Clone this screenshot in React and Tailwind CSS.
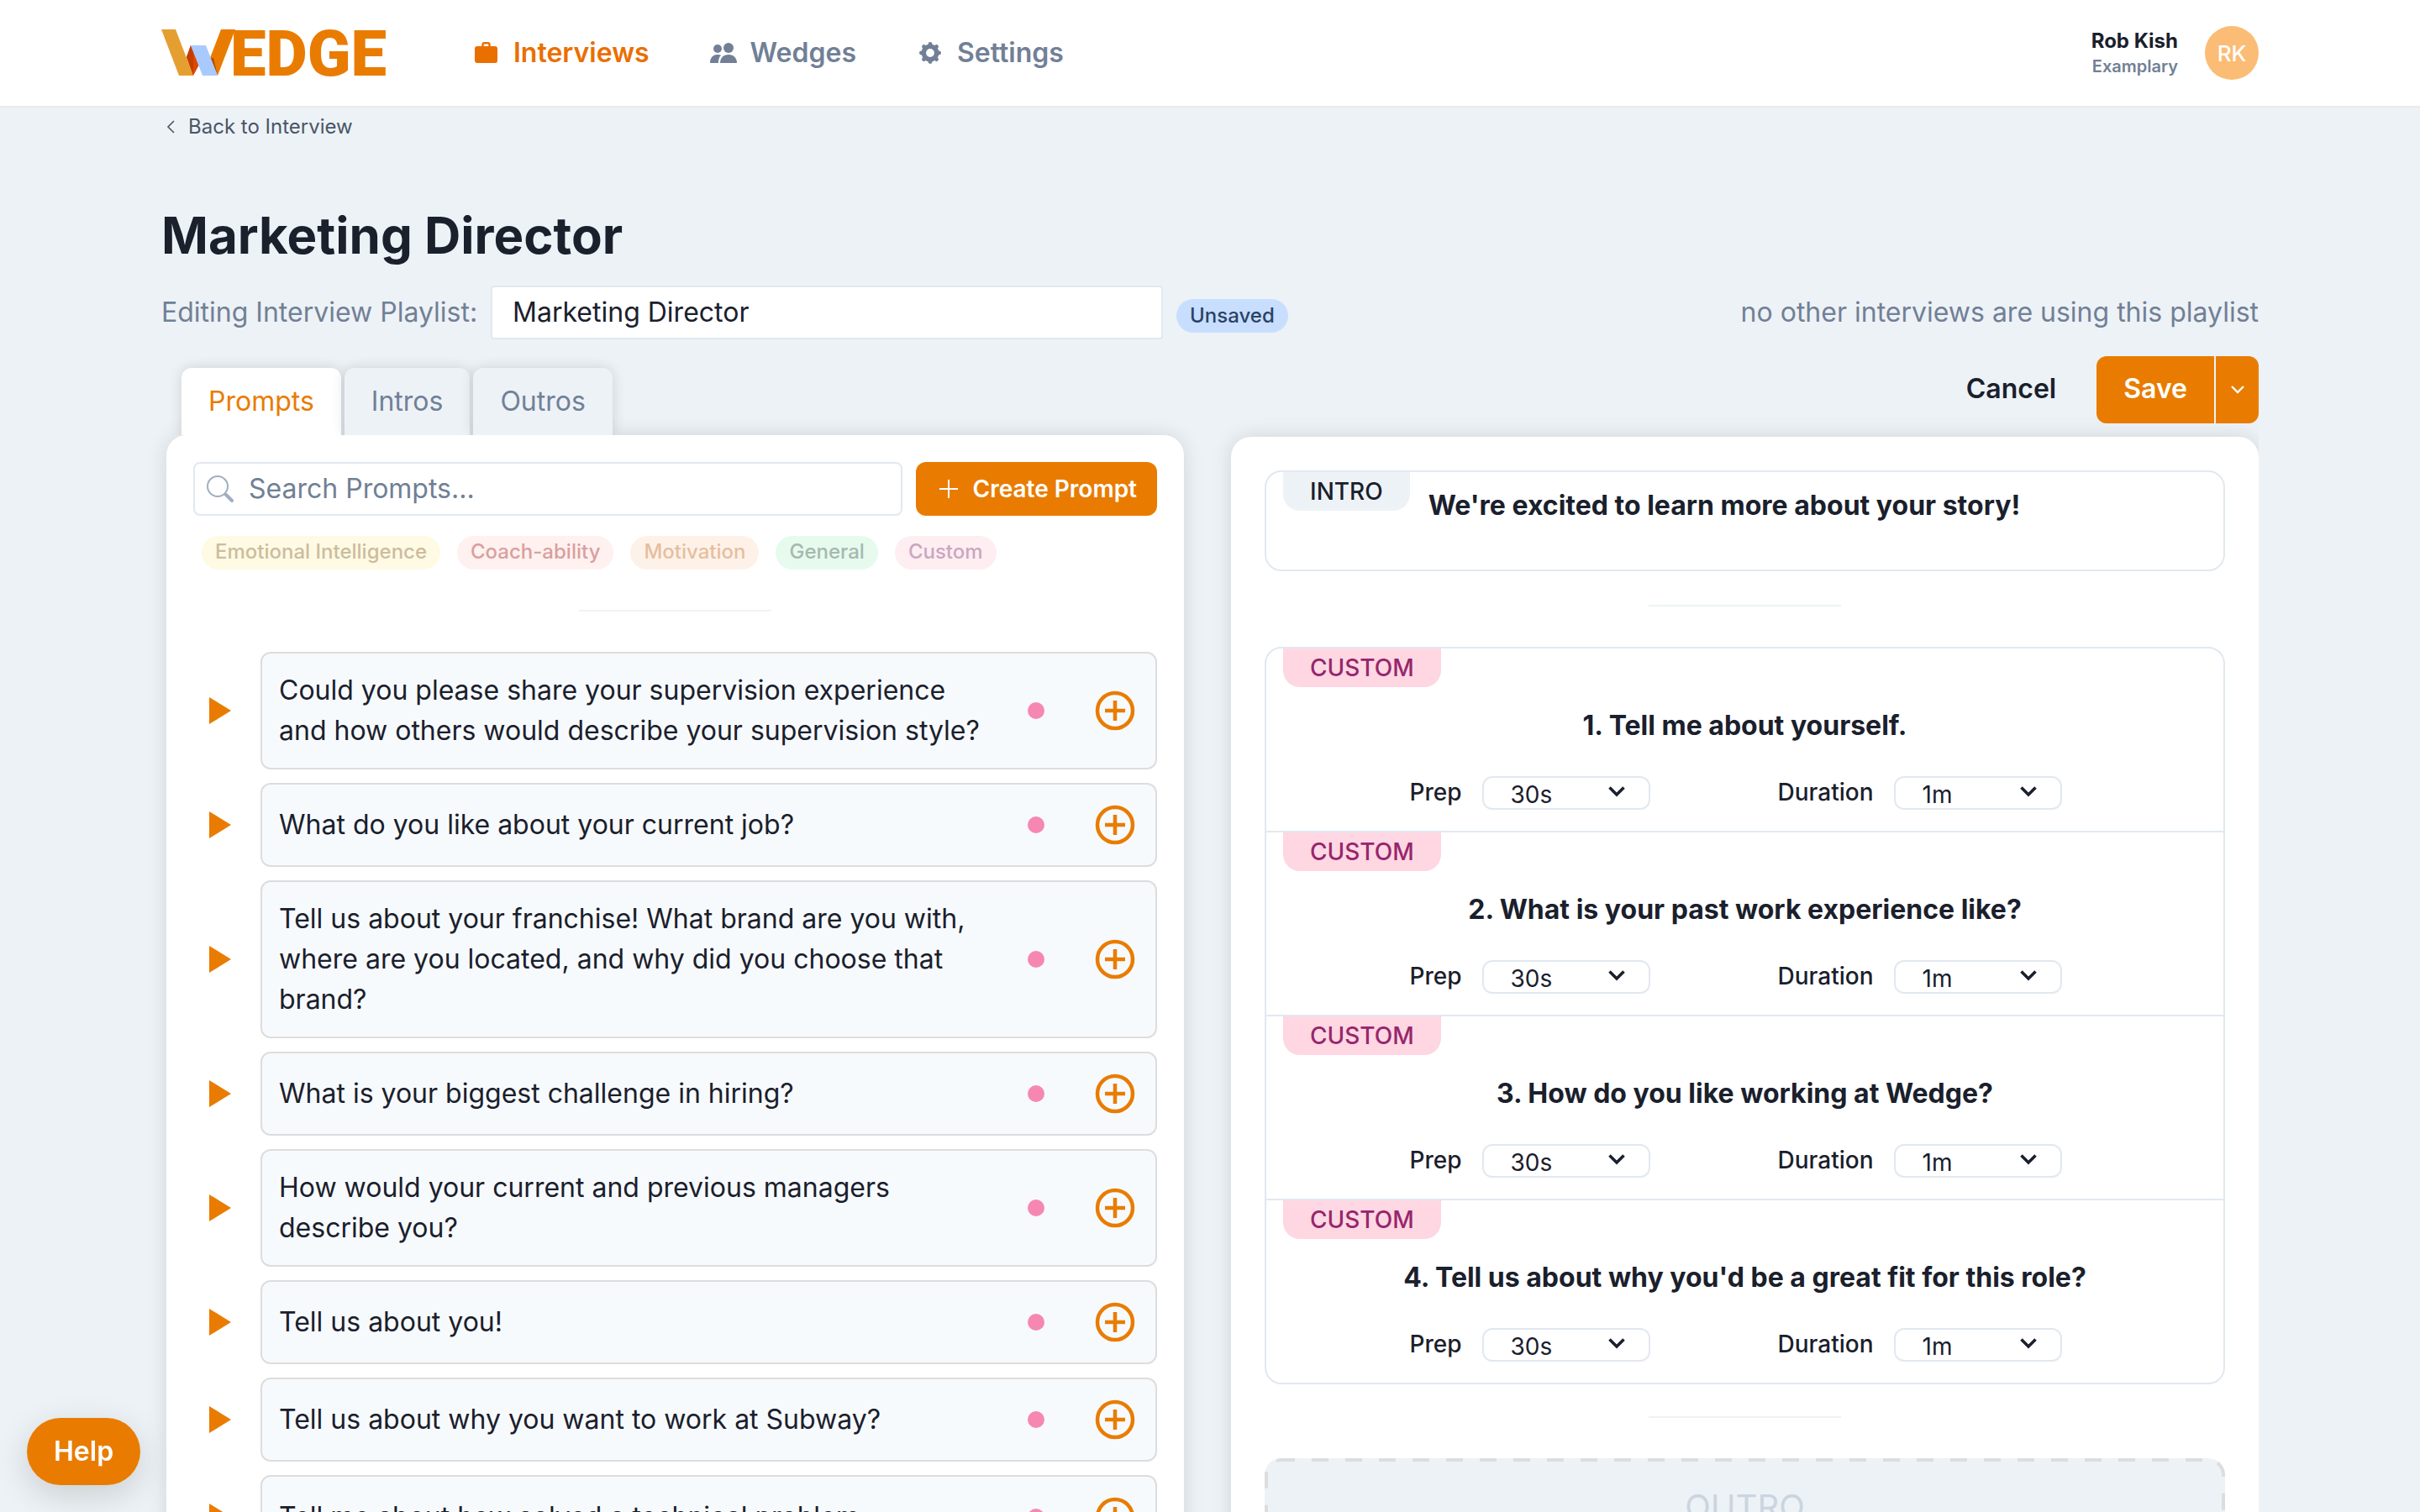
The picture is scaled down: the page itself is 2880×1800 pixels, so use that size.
import { useState } from "react";

const prompts = [
  "Could you please share your supervision experience and how others would describe your supervision style?",
  "What do you like about your current job?",
  "Tell us about your franchise! What brand are you with, where are you located, and why did you choose that brand?",
  "What is your biggest challenge in hiring?",
  "How would your current and previous managers describe you?",
  "Tell us about you!",
  "Tell us about why you want to work at Subway?",
  "Tell me about how solved a technical problem",
];

const questions = [
  "Tell me about yourself.",
  "What is your past work experience like?",
  "How do you like working at Wedge?",
  "Tell us about why you'd be a great fit for this role?",
];

const categories = [
  { name: "Emotional Intelligence", style: "bg-[#fefae3] text-[#cdbc9f]" },
  { name: "Coach-ability", style: "bg-[#fef1ef] text-[#d99f9f]" },
  { name: "Motivation", style: "bg-[#fef2e8] text-[#e6be9f]" },
  { name: "General", style: "bg-[#e7faee] text-[#a6b9ae]" },
  { name: "Custom", style: "bg-[#feeef2] text-[#cba6c0]" },
];

function Logo() {
  return (
    <svg className="overflow-visible" width="268" height="56" viewBox="0 0 268 56" role="img" aria-label="Wedge">
      <polygon points="71,0 88,0 67,55 58,34" fill="#e97c00" />
      <polygon points="0,0 17,0 38,55 21,55" fill="#e59f30" />
      <polygon points="35,19 45,42 38,55 30,33" fill="#dd4800" />
      <polygon points="35,19 38,28 38,55 30,33" fill="#c63d00" />
      <polygon points="58,34 62,34 67,55" fill="#b84a00" />
      <polygon points="35,19 53,19 67,55 49,55" fill="#a9caff" />
      <text x="82" y="55" fill="#e97c00" fontFamily="Roboto, sans-serif" fontWeight="900" fontSize="76">
        EDGE
      </text>
    </svg>
  );
}

function BriefcaseIcon() {
  return (
    <svg width="32" height="32" viewBox="0 0 32 32" fill="currentColor">
      <path d="M11.5 9V6a1.8 1.8 0 0 1 1.8-1.8h4.400A1.8 1.8 0 0 1 19.500 6v3" fill="none" stroke="currentColor" strokeWidth="2.400" />
      <rect x="2" y="8" width="27" height="20" rx="3" />
    </svg>
  );
}

function PeopleIcon() {
  return (
    <svg width="32" height="32" viewBox="0 0 32 32" fill="currentColor">
      <circle cx="9" cy="11" r="5" />
      <circle cx="22" cy="10" r="6" />
      <path d="M0 28c0-5.500 3-10 8.500-10 2 0 3.500.2 4.700.7C11 20.600 10 23.500 9.800 28z" />
      <path d="M12 28c0-6 4-10 10-10s10 4 10 10z" />
    </svg>
  );
}

function GearIcon() {
  const teeth = [0, 45, 90, 135, 180, 225, 270, 315];
  return (
    <svg width="32" height="32" viewBox="0 0 32 32" fill="currentColor">
      <circle cx="16" cy="16" r="7.700" fill="none" stroke="currentColor" strokeWidth="5.500" />
      {teeth.map((a) => (
        <circle key={a} cx="16" cy="5.400" r="2.400" transform={`rotate(${a} 16 16)`} />
      ))}
    </svg>
  );
}

function NavLink({ icon, label, active }) {
  return (
    <a
      href="#"
      className={`flex items-center gap-4 text-[32px] leading-[48px] font-semibold ${
        active ? "text-[#e96f00]" : "text-[#718096]"
      }`}
    >
      {icon}
      {label}
    </a>
  );
}

function Header() {
  return (
    <header className="border-b-2 border-[#e9ebec] bg-white">
      <div className="flex h-[126px] items-center px-48">
        <Logo />
        <nav className="ml-[103px] flex items-center gap-[72px]">
          <NavLink icon={<BriefcaseIcon />} label="Interviews" active />
          <NavLink icon={<PeopleIcon />} label="Wedges" />
          <NavLink icon={<GearIcon />} label="Settings" />
        </nav>
        <div className="ml-auto flex items-center gap-8">
          <div className="text-right">
            <p className="text-[24px] leading-[32px] font-bold">Rob Kish</p>
            <p className="text-[20px] leading-[28px] font-semibold text-[#718096]">Examplary</p>
          </div>
          <div className="flex size-16 items-center justify-center rounded-full bg-[#fbbc75] text-[26px] font-medium text-white">
            RK
          </div>
        </div>
      </div>
    </header>
  );
}

function Tab({ label, active, onClick }) {
  return (
    <button
      type="button"
      role="tab"
      aria-selected={active}
      onClick={onClick}
      className={`h-20 rounded-t-xl px-8 pt-1 pb-1 text-[32px] leading-[48px] shadow-[0_0_16px_rgba(0,0,0,0.14)] ${
        active ? "bg-white text-[#e97c00]" : "bg-[#edf2f6] text-[#718096]"
      }`}
    >
      {label}
    </button>
  );
}

function Divider() {
  return <hr className="mx-auto w-[229px] border-t-2 border-[#edf2f6]" />;
}

function PromptRow({ text }) {
  return (
    <li className="flex items-center">
      <button type="button" aria-label="Play prompt" className="flex w-20 shrink-0 pl-[18px] text-[#e97c00]">
        <svg width="28" height="32" viewBox="0 0 28 32" fill="currentColor">
          <path d="M1 0v32l26-16z" />
        </svg>
      </button>
      <div className="flex min-h-[100px] grow items-center rounded-xl border-2 border-[#dddddd] bg-[#f7fafd] py-5 pr-6 pl-5">
        <p className="max-w-[850px] grow text-[32px] leading-[48px]">{text}</p>
        <span className="ml-auto size-5 shrink-0 rounded-full bg-[#f687b3]"></span>
        <button type="button" aria-label="Add prompt" className="ml-[60px] shrink-0 text-[#e97c00]">
          <svg width="48" height="48" viewBox="0 0 48 48" fill="none" stroke="currentColor" strokeWidth="4.500">
            <circle cx="24" cy="24" r="21" />
            <path d="M24 12v24M12 24h24" />
          </svg>
        </button>
      </div>
    </li>
  );
}

function PromptLibrary() {
  return (
    <section className="rounded-t-3xl bg-white p-8 shadow-[0_0_24px_rgba(0,0,0,0.12)]">
      <div className="flex gap-4">
        <div className="relative flex grow">
          <svg className="absolute top-4 left-4" width="32" height="32" viewBox="0 0 32 32" fill="none" stroke="#a0aec0">
            <circle cx="13" cy="13" r="12" strokeWidth="2" />
            <path d="M21.500 21.500l1.500 1.500" strokeWidth="2" />
            <path d="M23 23l7 7" strokeWidth="4" strokeLinecap="round" />
          </svg>
          <input
            type="text"
            aria-label="Search prompts"
            placeholder="Search Prompts..."
            className="h-16 w-full rounded-lg border-2 border-[#e2e8f0] pb-[2px] pl-16 text-[32px] placeholder:text-[#718096]"
          />
        </div>
        <button
          type="button"
          className="flex h-16 shrink-0 items-center gap-[18px] rounded-xl bg-[#e97c00] px-6 text-[28px] font-semibold text-white"
        >
          <svg className="ml-1" width="22" height="22" viewBox="0 0 22 22" stroke="currentColor" strokeWidth="2">
            <path d="M11 0v22M0 11h22" />
          </svg>
          Create Prompt
        </button>
      </div>

      <div className="mt-6 flex gap-5 px-[10px]">
        {categories.map((c) => (
          <button key={c.name} type="button" className={`h-10 rounded-full px-4 pb-[2px] text-[24px] leading-[36px] font-medium ${c.style}`}>
            {c.name}
          </button>
        ))}
      </div>

      <div className="py-12">
        <Divider />
      </div>

      <ul className="flex flex-col gap-4">
        {prompts.map((p) => (
          <PromptRow key={p} text={p} />
        ))}
      </ul>
    </section>
  );
}

function TimeSelect({ label, options }) {
  return (
    <label className="flex items-center gap-6 text-[28px] leading-[40px] font-medium">
      <span className="pb-[2px]">{label}</span>
      <span className="relative flex">
        <select className="h-10 w-[200px] appearance-none rounded-xl border-2 border-[#e2e8f0] bg-white pb-1 pl-8 font-normal">
          {options.map((o) => (
            <option key={o}>{o}</option>
          ))}
        </select>
        <svg
          className="pointer-events-none absolute top-3 right-[30px]"
          width="20"
          height="14"
          viewBox="0 0 20 14"
          fill="none"
          stroke="currentColor"
          strokeWidth="3.600"
        >
          <path d="M1.500 1.500l8.500 8.500 8.500-8.500" />
        </svg>
      </span>
    </label>
  );
}

function Question({ number, text }) {
  return (
    <li className="border-[#e2e8f0] pb-6 not-last:border-b-2">
      <span className="ml-5 flex h-[46px] w-fit items-center rounded-b-[20px] bg-[#fed7e2] px-8 text-[28px] font-medium text-[#97266d]">
        CUSTOM
      </span>
      <h3 className="mt-[22px] text-center text-[32px] leading-[48px] font-bold">
        {number}. {text}
      </h3>
      <div className="mt-[35px] flex justify-center gap-[152px] pr-[22px]">
        <TimeSelect label="Prep" options={["30s", "1m", "2m"]} />
        <TimeSelect label="Duration" options={["1m", "2m", "3m"]} />
      </div>
    </li>
  );
}

function Playlist() {
  return (
    <section className="mt-4 grow rounded-t-3xl bg-white px-10 pt-10 shadow-[0_0_24px_rgba(0,0,0,0.12)] [clip-path:inset(-40px_0_0_-40px)]">
      <div className="flex h-[120px] items-start gap-[22px] rounded-[20px] border-2 border-[#e2e8f0]">
        <span className="ml-5 flex h-[46px] items-center rounded-b-[20px] bg-[#edf2f6] px-8 text-[28px] font-medium">
          INTRO
        </span>
        <h3 className="pt-4 text-[32px] leading-[48px] font-bold">We're excited to learn more about your story!</h3>
      </div>

      <div className="pt-10 pb-12">
        <Divider />
      </div>

      <ol className="rounded-[20px] border-2 border-[#e2e8f0]">
        {questions.map((q, i) => (
          <Question key={q} number={i + 1} text={q} />
        ))}
      </ol>

      <div className="pt-[38px] pb-12">
        <Divider />
      </div>

      <div className="relative overflow-hidden rounded-[20px] bg-[#edf2f6] py-7 text-center text-[40px] leading-[60px] text-[#cbd5e0]">
        <svg className="absolute inset-0 size-full" fill="none">
          <rect width="100%" height="100%" rx="20" stroke="#dddddd" strokeWidth="8" strokeDasharray="20 20" strokeDashoffset="4" />
        </svg>
        OUTRO
      </div>
    </section>
  );
}

export default function App() {
  const [tab, setTab] = useState("Prompts");
  const [name, setName] = useState("Marketing Director");

  return (
    <div className="h-screen overflow-hidden bg-[#edf2f6] font-['Inter',sans-serif] text-[#1a202c]">
      <Header />
      <main className="px-48 pt-[5px]">
        <a href="#" className="flex w-fit items-center gap-[10px] pl-[6px] text-[24px] leading-[36px] text-[#4a5568]">
          <svg width="16" height="16" viewBox="0 0 16 16" fill="none" stroke="currentColor" strokeWidth="1.600">
            <path d="M9 1L2 8l7 7" />
          </svg>
          Back to Interview
        </a>

        <h1 className="mt-[75px] text-[60px] leading-[72px] font-bold">Marketing Director</h1>

        <div className="mt-6 flex items-center gap-4 text-[32px] leading-[48px]">
          <label htmlFor="playlist" className="text-[#718096]">
            Editing Interview Playlist:
          </label>
          <input
            id="playlist"
            type="text"
            value={name}
            onChange={(e) => setName(e.target.value)}
            className="h-16 w-[800px] rounded-sm border-2 border-[#e2e8f0] bg-white px-6 pb-[2px]"
          />
          <span className="mt-2 flex h-10 items-center rounded-full bg-[#c8deff] px-4 text-[24px] font-medium text-[#2a4365]">
            Unsaved
          </span>
          <p className="ml-auto text-[#718096]">no other interviews are using this playlist</p>
        </div>

        <div className="grid grid-cols-[1217fr_1223fr] gap-14">
          <div className="pt-[34px] pl-[6px]">
            <div role="tablist" className="relative z-10 flex gap-1 px-[18px] [clip-path:inset(-24px_0_0_0)]">
              {["Prompts", "Intros", "Outros"].map((t) => (
                <Tab key={t} label={t} active={t === tab} onClick={() => setTab(t)} />
              ))}
            </div>
            <PromptLibrary />
          </div>

          <div className="flex flex-col pt-5">
            <div className="flex justify-end text-[32px] font-semibold">
              <button type="button" className="h-20 px-12 pb-[2px]">
                Cancel
              </button>
              <button type="button" className="h-20 rounded-l-xl bg-[#e97c00] px-8 pb-[2px] text-white">
                Save
              </button>
              <button
                type="button"
                aria-label="More save options"
                className="ml-[2px] flex h-20 w-[51px] items-center justify-center rounded-r-xl bg-[#e97c00] text-white"
              >
                <svg width="16" height="10" viewBox="0 0 16 10" fill="none" stroke="currentColor" strokeWidth="2.400">
                  <path d="M1 1l7 7 7-7" />
                </svg>
              </button>
            </div>
            <Playlist />
          </div>
        </div>
      </main>

      <button
        type="button"
        className="fixed bottom-8 left-8 z-20 h-20 rounded-full bg-[#e97c00] px-8 text-[32px] font-semibold text-white shadow-[0_12px_40px_rgba(0,0,0,0.15)]"
      >
        Help
      </button>
    </div>
  );
}
